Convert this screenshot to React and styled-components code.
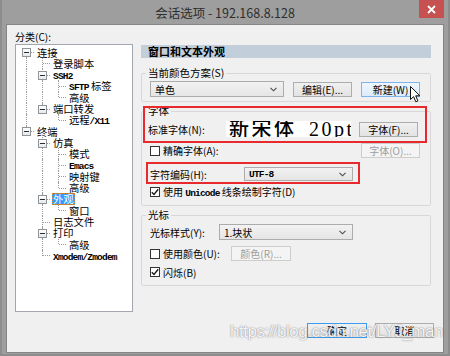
import React from 'react';
import styled, { createGlobalStyle } from 'styled-components';

// Session options dialog (SecureCRT style), "Appearance" page

const GlobalStyle = createGlobalStyle`
  html, body { margin: 0; padding: 0; }
  body {
    background: #8d8d8d;
    font-family: "Noto Sans CJK SC", "Noto Sans", sans-serif;
  }
`;

const Screen = styled.div`
  width: 450px;
  height: 356px;
  overflow: hidden;
  background: #8d8d8d;
`;

const Window = styled.div`
  margin-left: 2px;
  width: 446px;
  height: 354px;
  box-sizing: border-box;
  padding: 0 5px 2px 5px;
  background: #9e9e9e;
  display: flex;
  flex-direction: column;
`;

const TitleBar = styled.div`
  position: relative;
  height: 25px;
  flex: none;
  display: flex;
  align-items: center;
  justify-content: center;
  font-size: 12.5px;
  color: #2e2e2e;
`;

const CloseButton = styled.div`
  position: absolute;
  top: 0;
  right: -1px;
  width: 25px;
  height: 18px;
  background: #c75050;
  display: flex;
  align-items: center;
  justify-content: center;
`;

const Client = styled.div`
  position: relative;
  height: 327px;
  flex: none;
  background: #f0f0f0;
  box-shadow: 0 0 0 1px #858585;
  display: flex;
  flex-direction: column;
  font-size: 10px;
  color: #000;
`;

const Main = styled.div`
  display: flex;
  padding: 5px 0 0 8px;
`;

const LeftCol = styled.div`
  width: 118px;
  display: flex;
  flex-direction: column;
`;

const CategoryLabel = styled.div`
  height: 14px;
  line-height: 14px;
`;

const TreeBox = styled.div`
  height: 268px;
  box-sizing: border-box;
  border: 1px solid #a3a7ad;
  background: #fff;
  padding: 1.5px 0 0 3px;
`;

const TreeRow = styled.div`
  display: flex;
  height: 11.3px;
  line-height: 11.3px;
  white-space: nowrap;
`;

const Guide = styled.span`
  position: relative;
  flex: none;
  width: 16px;
  height: 100%;

  &::before {
    content: '';
    display: ${p => (p.$top || p.$bottom ? 'block' : 'none')};
    position: absolute;
    left: 7px;
    top: ${p => (p.$top ? '0' : '50%')};
    bottom: ${p => (p.$bottom ? '0' : '50%')};
    border-left: 1px dotted #9a9a9a;
  }

  &::after {
    content: '';
    display: ${p => (p.$elbow ? 'block' : 'none')};
    position: absolute;
    left: 8px;
    right: 1px;
    top: 50%;
    border-top: 1px dotted #9a9a9a;
  }
`;

const Expander = styled.span`
  position: absolute;
  z-index: 1;
  left: 3px;
  top: calc(50% - 4px);
  width: 9px;
  height: 9px;
  box-sizing: border-box;
  border: 1px solid #8f9499;
  background: linear-gradient(#fff, #e6e8ea);

  &::after {
    content: '';
    position: absolute;
    left: 1px;
    right: 1px;
    top: 3px;
    height: 1px;
    background: #2d2d2d;
  }
`;

const NodeText = styled.span`
  margin-left: 1px;
  padding: 0 1px;
  font-size: 10.3px;
  ${p =>
    p.$selected &&
    `
    background: #3399ff;
    color: #fff;
    line-height: 9.3px;
    border: 1px dotted #c98a3a;
    padding: 0;
  `}
`;

const Mono = styled.span`
  font-family: "Liberation Mono", "DejaVu Sans Mono", monospace;
  font-size: 9.5px;
  letter-spacing: -0.8px;
  font-weight: bold;
`;

const RightCol = styled.div`
  margin-left: 8px;
  width: 290px;
  padding-top: 15px;
  display: flex;
  flex-direction: column;
`;

const PageHeader = styled.div`
  height: 13px;
  line-height: 13px;
  padding-left: 7px;
  background: #c2ceda;
  font-size: 11px;
  font-weight: bold;
`;

const Group = styled.fieldset`
  margin: ${p => p.$gap}px 0 0 0;
  padding: 0;
  min-width: 0;
  border: 1px solid #d8d8d8;
  border-radius: 2px;
`;

const Legend = styled.legend`
  margin-left: 4px;
  padding: 0 2px;
  height: 12px;
  line-height: 12px;
  font-size: 10.5px;
`;

const GroupBody = styled.div`
  display: flex;
  flex-direction: column;
  padding: ${p => p.$top}px 10px ${p => p.$bottom}px 8px;
`;

const Row = styled.div`
  display: flex;
  align-items: center;
  height: ${p => p.$h}px;
  margin-top: ${p => p.$mt || 0}px;
`;

const FieldLabel = styled.span`
  flex: none;
  width: ${p => p.$w}px;
  margin-left: ${p => p.$ml || 0}px;
  white-space: nowrap;
`;

const Select = styled.div`
  flex: none;
  width: ${p => p.$w}px;
  height: ${p => p.$h || 16}px;
  box-sizing: border-box;
  border: 1px solid #acacac;
  background: linear-gradient(#f2f2f2, #e5e5e5);
  display: flex;
  align-items: center;
  justify-content: space-between;
  padding: 0 6px 0 4px;
`;

const Button = styled.div`
  flex: none;
  width: ${p => p.$w || 59}px;
  height: 15px;
  margin-left: ${p => (p.$auto ? 'auto' : `${p.$ml || 0}px`)};
  box-sizing: border-box;
  display: flex;
  align-items: center;
  justify-content: center;
  font-size: 10px;
  white-space: nowrap;
  border: 1px solid ${p => (p.$state === 'hover' ? '#7eb4ea' : p.$state === 'default' ? '#3c9cf0' : p.$disabled ? '#cdcdcd' : '#adadad')};
  background: ${p =>
    p.$state === 'hover'
      ? 'linear-gradient(#eef6fd, #dcecfc)'
      : p.$disabled
      ? '#f4f4f4'
      : 'linear-gradient(#f0f0f0, #e3e3e3)'};
  color: ${p => (p.$disabled ? '#9d9d9d' : '#000')};
`;

const FontPreview = styled.div`
  flex: none;
  width: 125px;
  height: 16px;
  background: #fff;
  overflow: hidden;
  white-space: nowrap;
  padding-left: 3px;
  box-sizing: border-box;
  font-family: "Liberation Serif", "Noto Sans CJK SC", serif;
  font-size: 20px;
  line-height: 16px;
  letter-spacing: 2.5px;
  word-spacing: 5px;
  font-weight: 500;
`;

const Box = styled.span`
  flex: none;
  width: 10px;
  height: 10px;
  box-sizing: border-box;
  margin-left: ${p => p.$ml || 0}px;
  margin-right: 3px;
  border: 1px solid #333;
  background: #fff;
  display: flex;
  align-items: center;
  justify-content: center;
`;

const Footer = styled.div`
  margin-top: 11px;
  display: flex;
  justify-content: flex-end;
  gap: 8px;
  padding-right: 9px;
`;

const Highlight = styled.div`
  position: absolute;
  left: ${p => p.$x}px;
  top: ${p => p.$y}px;
  width: ${p => p.$w}px;
  height: ${p => p.$h}px;
  box-sizing: border-box;
  border: 2px solid #e8292e;
  pointer-events: none;
`;

const Pointer = styled.svg`
  position: absolute;
  left: 403px;
  top: 61px;
`;

const Watermark = styled.div`
  position: absolute;
  left: 223px;
  top: 297px;
  font-family: "Liberation Sans", Arial, sans-serif;
  font-size: 17px;
  line-height: 20px;
  letter-spacing: -0.5px;
  color: rgba(255, 255, 255, 0.92);
  text-shadow: 0 0 1px rgba(80, 80, 80, 0.6), 0 0 2px rgba(110, 110, 110, 0.45);
  pointer-events: none;
  white-space: nowrap;
`;

const Chevron = () => (
  <svg width="7" height="5" viewBox="0 0 7 5">
    <path d="M0.5 0.8 L3.5 3.8 L6.5 0.8" fill="none" stroke="#4a4a4a" strokeWidth="1.1" />
  </svg>
);

const Check = ({ checked }) => (
  <Box>
    {checked && (
      <svg width="8" height="8" viewBox="0 0 8 8">
        <path d="M0.8 4.2 L3 6.4 L7.2 1.2" fill="none" stroke="#1a1a1a" strokeWidth="1.4" />
      </svg>
    )}
  </Box>
);

const tree = [
  {
    label: '连接',
    children: [
      { label: '登录脚本' },
      { label: <Mono>SSH2</Mono>, children: [{ label: <><Mono>SFTP</Mono> 标签</> }, { label: '高级' }] },
      { label: '端口转发', children: [{ label: <>远程<Mono>/X11</Mono></> }] },
    ],
  },
  {
    label: '终端',
    children: [
      { label: '仿真', children: [{ label: '模式' }, { label: <Mono>Emacs</Mono> }, { label: '映射键' }, { label: '高级' }] },
      { label: '外观', selected: true, children: [{ label: '窗口' }] },
      { label: '日志文件' },
      { label: '打印', children: [{ label: '高级' }] },
      { label: <Mono>Xmodem/Zmodem</Mono> },
    ],
  },
];

const flatten = (nodes, depth = 0, trail = []) =>
  nodes.flatMap((n, i) => {
    const last = i === nodes.length - 1;
    const row = { ...n, depth, last, first: depth === 0 && i === 0, trail };
    return [row, ...(n.children ? flatten(n.children, depth + 1, [...trail, last]) : [])];
  });

const rows = flatten(tree);

export default function App() {
  return (
    <Screen>
      <GlobalStyle />
      <Window>
        <TitleBar>
          会话选项 - 192.168.8.128
          <CloseButton>
            <svg width="9" height="9" viewBox="0 0 9 9">
              <path d="M1 1 L8 8 M8 1 L1 8" stroke="#fff" strokeWidth="1.8" />
            </svg>
          </CloseButton>
        </TitleBar>
        <Client>
          <Main>
            <LeftCol>
              <CategoryLabel>分类(C):</CategoryLabel>
              <TreeBox>
                {rows.map((row, idx) => (
                  <TreeRow key={idx}>
                    {row.trail.map((ancLast, k) => (
                      <Guide key={k} $top={!ancLast} $bottom={!ancLast} />
                    ))}
                    <Guide $top={!row.first} $bottom={!row.last} $elbow>
                      {row.children && <Expander />}
                    </Guide>
                    <NodeText $selected={row.selected}>{row.label}</NodeText>
                  </TreeRow>
                ))}
              </TreeBox>
            </LeftCol>

            <RightCol>
              <PageHeader>窗口和文本外观</PageHeader>

              <Group $gap={9}>
                <Legend>当前颜色方案(S)</Legend>
                <GroupBody $top={2} $bottom={4}>
                  <Row $h={16}>
                    <Select $w={134}>
                      单色
                      <Chevron />
                    </Select>
                    <Button $ml={9}>编辑(E)...</Button>
                    <Button $ml={9} $state="hover">新建(W)</Button>
                  </Row>
                </GroupBody>
              </Group>

              <Group $gap={3}>
                <Legend>字体</Legend>
                <GroupBody $top={4} $bottom={7}>
                  <Row $h={16}>
                    <FieldLabel $w={78} $ml={-2}>标准字体(N):</FieldLabel>
                    <FontPreview>新宋体 20pt</FontPreview>
                    <Button $ml={8}>字体(F)...</Button>
                  </Row>
                  <Row $h={15} $mt={6}>
                    <Check />
                    <FieldLabel>精确字体(A):</FieldLabel>
                    <Button $auto $disabled>字体(O)...</Button>
                  </Row>
                  <Row $h={14} $mt={9}>
                    <FieldLabel $w={94}>字符编码(H):</FieldLabel>
                    <Select $w={109} $h={14}>
                      <Mono>UTF-8</Mono>
                      <Chevron />
                    </Select>
                  </Row>
                  <Row $h={13} $mt={4}>
                    <Check checked />
                    <FieldLabel>
                      使用 <Mono>Unicode</Mono> 线条绘制字符(D)
                    </FieldLabel>
                  </Row>
                </GroupBody>
              </Group>

              <Group $gap={3}>
                <Legend>光标</Legend>
                <GroupBody $top={3} $bottom={6}>
                  <Row $h={16}>
                    <FieldLabel $w={69}>光标样式(Y):</FieldLabel>
                    <Select $w={134}>
                      1.块状
                      <Chevron />
                    </Select>
                  </Row>
                  <Row $h={15} $mt={6}>
                    <Check />
                    <FieldLabel $w={68}>使用颜色(U):</FieldLabel>
                    <Button $w={60} $disabled>颜色(R)...</Button>
                  </Row>
                  <Row $h={14} $mt={4}>
                    <Check checked />
                    <FieldLabel>闪烁(B)</FieldLabel>
                  </Row>
                </GroupBody>
              </Group>
            </RightCol>
          </Main>

          <Footer>
            <Button $w={60} $state="default">确定</Button>
            <Button $w={59}>取消</Button>
          </Footer>

          <Highlight $x={136} $y={81} $w={284} $h={37} />
          <Highlight $x={139} $y={137} $w={214} $h={22} />

          <Pointer width="11" height="17" viewBox="0 0 11 17">
            <path
              d="M0.5 0.5 L0.5 13.5 L3.6 10.6 L5.8 15.8 L7.9 14.9 L5.7 9.8 L9.9 9.8 Z"
              fill="#fff"
              stroke="#111"
              strokeWidth="1"
              strokeLinejoin="round"
            />
          </Pointer>

          <Watermark>https://blog.csdn.net/LYJ_man</Watermark>
        </Client>
      </Window>
    </Screen>
  );
}
